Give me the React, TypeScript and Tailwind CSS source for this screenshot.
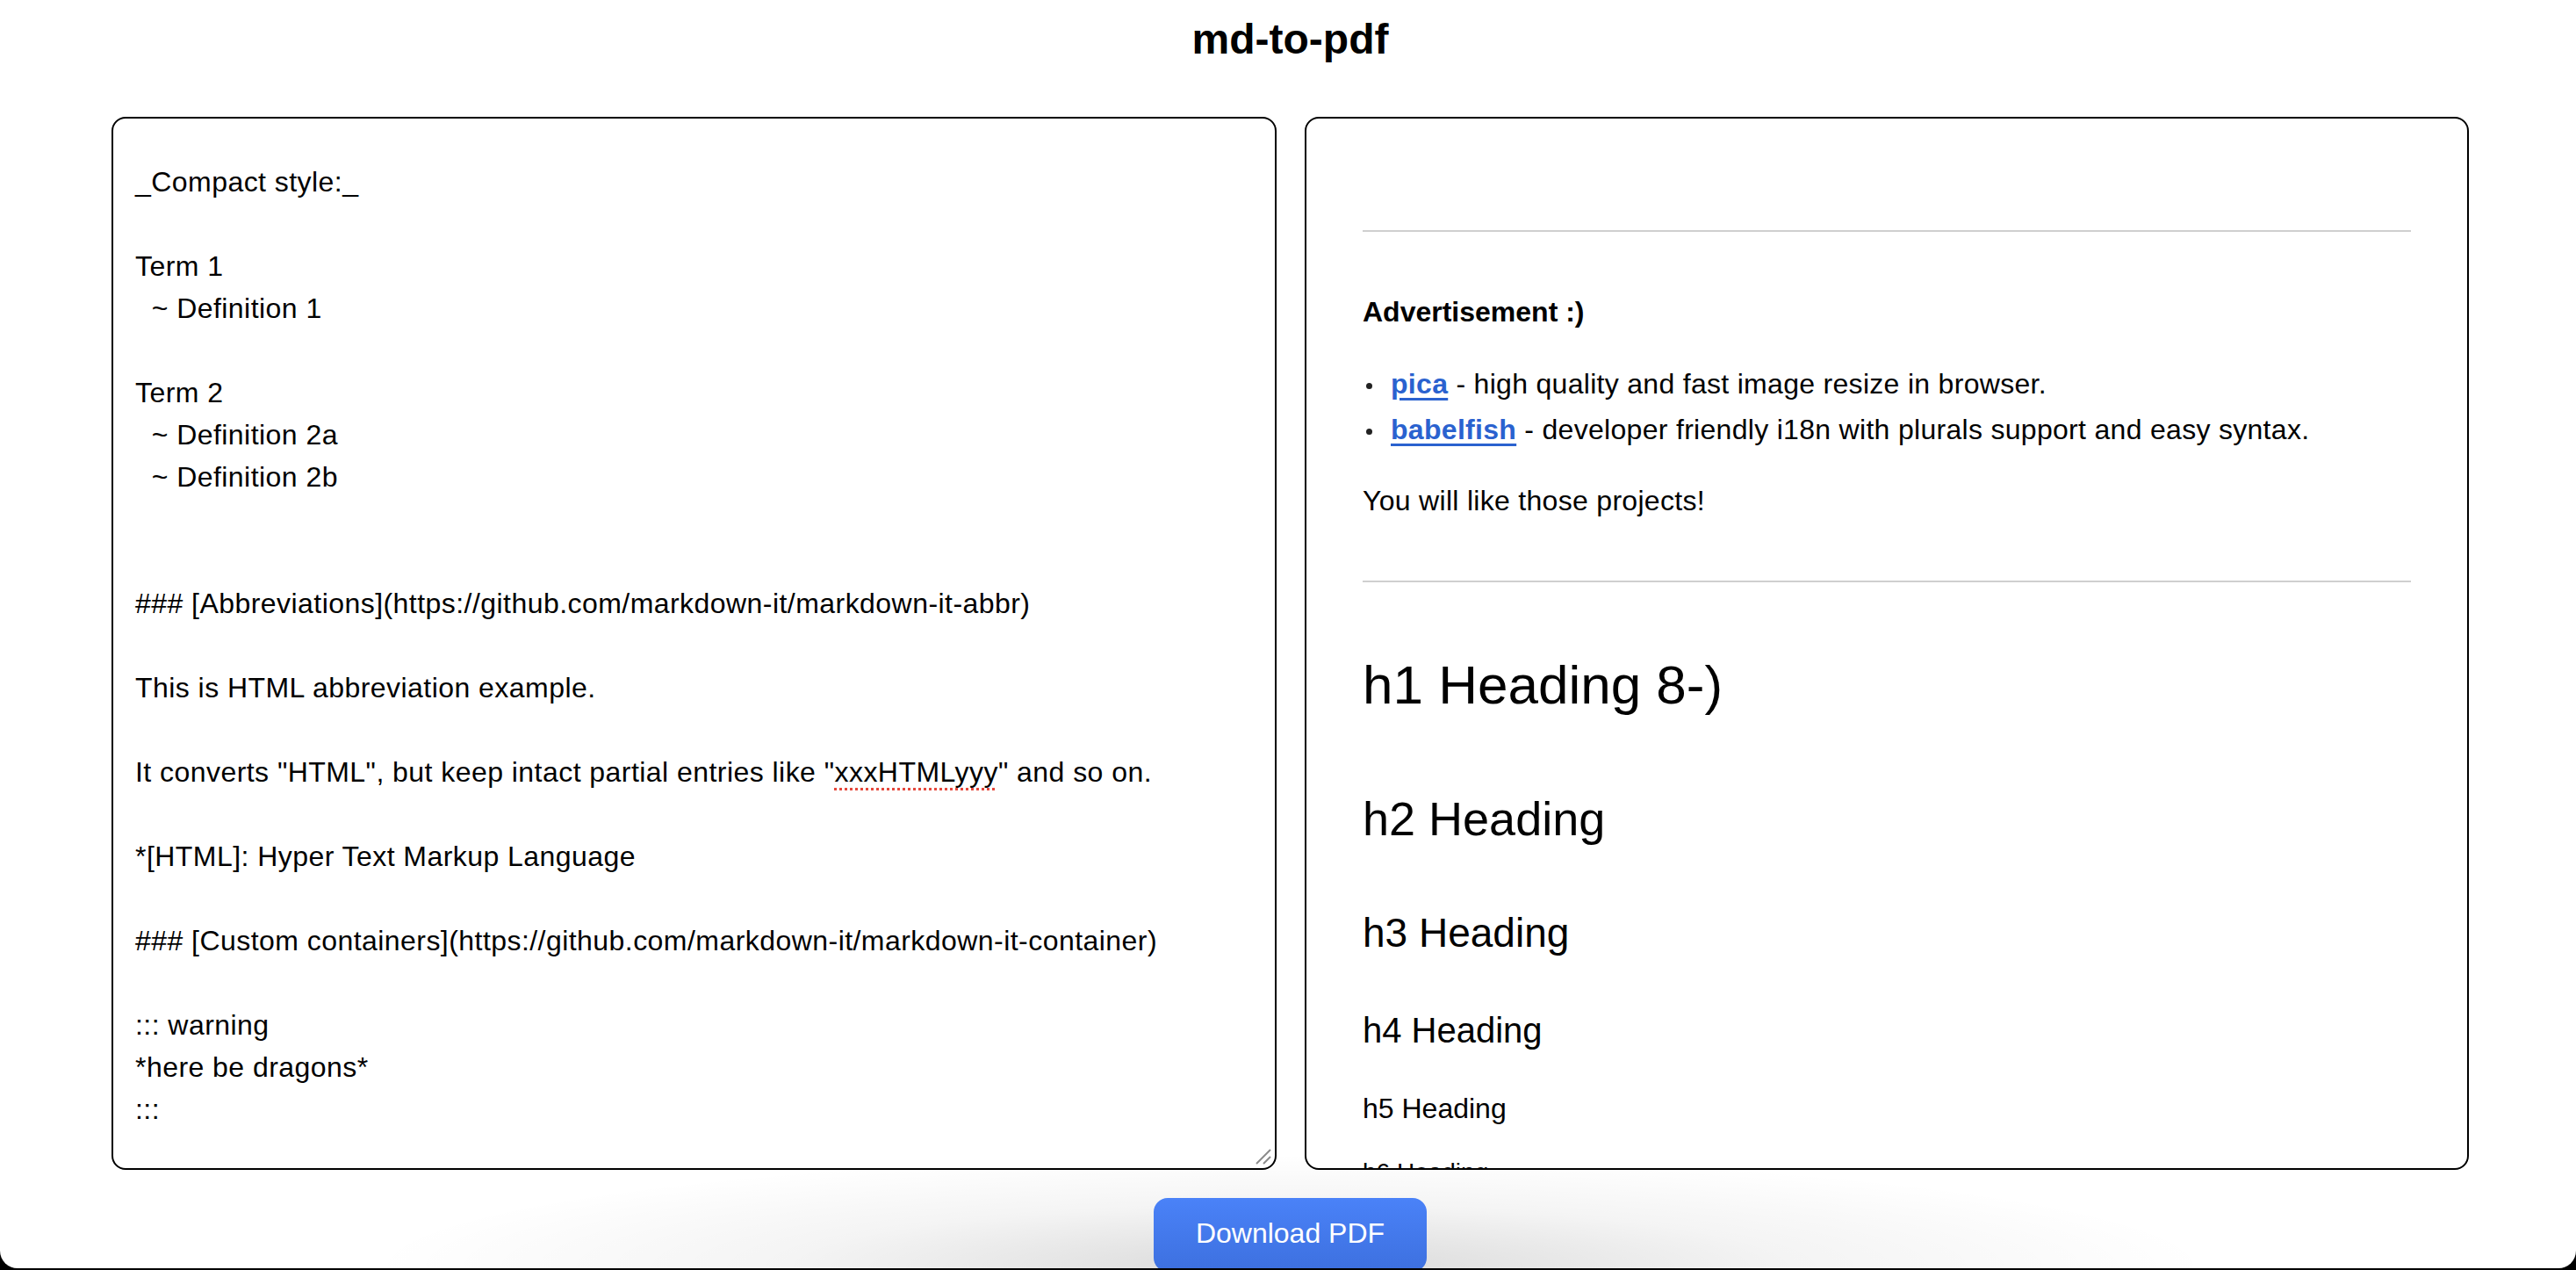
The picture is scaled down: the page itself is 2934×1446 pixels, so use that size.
import React from "react";

const editorLines: React.ReactNode[] = [
  "_Compact style:_",
  "",
  "Term 1",
  "  ~ Definition 1",
  "",
  "Term 2",
  "  ~ Definition 2a",
  "  ~ Definition 2b",
  "",
  "",
  "### [Abbreviations](https://github.com/markdown-it/markdown-it-abbr)",
  "",
  "This is HTML abbreviation example.",
  "",
  <>
    It converts "HTML", but keep intact partial entries like "
    <span className="underline decoration-dotted decoration-[#e5483c] decoration-[3px] underline-offset-[7px]">
      xxxHTMLyyy
    </span>
    " and so on.
  </>,
  "",
  "*[HTML]: Hyper Text Markup Language",
  "",
  "### [Custom containers](https://github.com/markdown-it/markdown-it-container)",
  "",
  "::: warning",
  "*here be dragons*",
  ":::",
  "",
  "",
];

function Editor() {
  return (
    <div className="relative w-[1327px] h-[1199px] border-2 border-black rounded-[16px] overflow-hidden bg-white">
      <div className="pt-[48px] pl-[25px] text-[32px] leading-[48px] tracking-[0.45px] text-black whitespace-pre">
        {editorLines.map((l, i) => (
          <div key={i} className="h-[48px]">
            {l}
          </div>
        ))}
      </div>
      <svg
        className="absolute right-[2px] bottom-[2px]"
        width="22"
        height="22"
        viewBox="0 0 22 22"
      >
        <line x1="3" y1="19" x2="19" y2="3" stroke="#8a8a8a" strokeWidth="2" />
        <line x1="11" y1="19" x2="19" y2="11" stroke="#8a8a8a" strokeWidth="2" />
      </svg>
    </div>
  );
}

function Bullet({ children }: { children: React.ReactNode }) {
  return (
    <div className="flex items-start h-[52px] leading-[52px] text-[32px] tracking-[0.3px]">
      <div className="w-[32px] flex justify-start pl-[4px] pt-[25px]">
        <div className="w-[7px] h-[7px] rounded-full bg-[#222]" />
      </div>
      <div>{children}</div>
    </div>
  );
}

function Preview() {
  const link =
    "font-bold text-[#2a62cf] underline decoration-[3px] underline-offset-[5px]";
  return (
    <div className="w-[1326px] h-[1199px] border-2 border-black rounded-[16px] overflow-hidden bg-white">
      <div className="px-[64px] text-black">
        <div className="mt-[127px] h-[2px] bg-[#cfcfcf]" />
        <div className="mt-[67px] h-[48px] leading-[48px] text-[32px] font-bold">
          Advertisement :)
        </div>
        <div className="mt-[32px]">
          <Bullet>
            <span className={link}>pica</span> - high quality and fast image resize in browser.
          </Bullet>
          <Bullet>
            <span className={link}>babelfish</span> - developer friendly i18n with plurals support and easy syntax.
          </Bullet>
        </div>
        <div className="mt-[29px] h-[52px] leading-[52px] text-[32px] tracking-[0.3px]">
          You will like those projects!
        </div>
        <div className="mt-[65px] h-[2px] bg-[#cfcfcf]" />
        <div className="mt-[80px] h-[74px] leading-[74px] text-[62px] font-normal">
          h1 Heading 8-)
        </div>
        <div className="mt-[83px] h-[65px] leading-[65px] text-[54px] font-normal">
          h2 Heading
        </div>
        <div className="mt-[70px] h-[55px] leading-[55px] text-[46px] font-normal">
          h3 Heading
        </div>
        <div className="mt-[59px] h-[48px] leading-[48px] text-[40px] font-normal">
          h4 Heading
        </div>
        <div className="mt-[45px] h-[40px] leading-[40px] text-[32px] font-normal">
          h5 Heading
        </div>
        <div className="mt-[36px] h-[34px] leading-[34px] text-[28px] font-normal">
          h6 Heading
        </div>
      </div>
    </div>
  );
}

export default function App() {
  return (
    <div className="h-[1446px] w-[2934px] bg-black overflow-hidden font-['Liberation_Sans',Arial,sans-serif]">
      <div className="relative h-[1444px] bg-white rounded-b-[20px] overflow-hidden">
        <div
          className="absolute left-[420px] bottom-0 w-[2100px] h-[130px] bg-[radial-gradient(ellipse_50%_100%_at_50%_100%,rgba(0,0,0,0.15),rgba(0,0,0,0.045)_55%,rgba(0,0,0,0)_100%)]"
        />
        <div className="relative pl-[127px] w-[2812px]">
          <div className="h-[133px] pt-[17px] text-center">
            <h1 className="text-[48px] leading-[56px] font-bold text-black">md-to-pdf</h1>
          </div>
          <div className="flex gap-[32px]">
            <Editor />
            <Preview />
          </div>
          <div className="flex justify-center pt-[32px]">
            <button className="w-[311px] h-[84px] rounded-[16px] bg-gradient-to-b from-[#4a82f8] to-[#3d70df] text-white text-[32px] leading-[40px] pb-[4px]">
              Download PDF
            </button>
          </div>
        </div>
      </div>
    </div>
  );
}
